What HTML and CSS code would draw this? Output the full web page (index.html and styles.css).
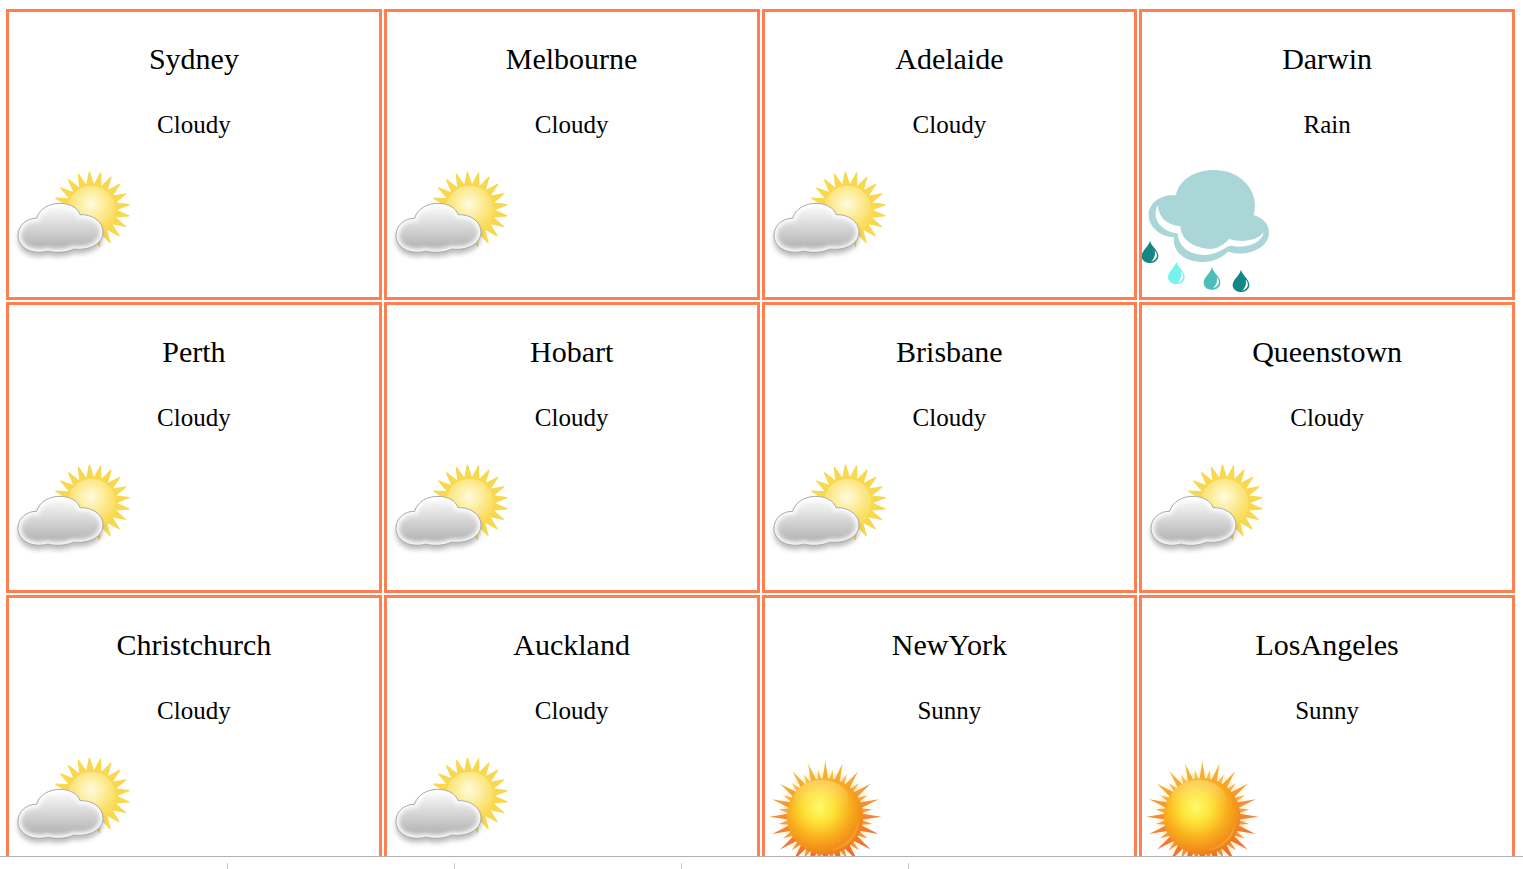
FILE: index.html
```html
<!DOCTYPE html>
<html lang="en">
<head>
<meta charset="utf-8">
<title>Weather</title>
<link rel="stylesheet" href="styles.css">
</head>
<body>
<svg class="icon-defs" aria-hidden="true">
  <defs>
    <radialGradient id="paleSun" gradientUnits="userSpaceOnUse" cx="273" cy="162" r="78">
      <stop offset="0" stop-color="#fffbe2"/><stop offset=".4" stop-color="#fdf0a8"/><stop offset="1" stop-color="#fbdc5e"/>
    </radialGradient>
    <linearGradient id="cloudFill" x1="0" y1="0" x2="0" y2="1">
      <stop offset="0" stop-color="#ffffff"/><stop offset=".3" stop-color="#e6e6e6"/><stop offset=".85" stop-color="#b8b8b8"/><stop offset="1" stop-color="#c4c4c4"/>
    </linearGradient>
    <radialGradient id="hotSun" gradientUnits="userSpaceOnUse" cx="178" cy="202" r="150">
      <stop offset="0" stop-color="#fffb6a"/><stop offset=".32" stop-color="#fde035"/><stop offset=".62" stop-color="#f9ae1d"/><stop offset="1" stop-color="#ec7a18"/>
    </radialGradient>
    <linearGradient id="hotRays" gradientUnits="userSpaceOnUse" x1="170" y1="62" x2="220" y2="398">
      <stop offset="0" stop-color="#f8bd33"/><stop offset=".5" stop-color="#f4873a"/><stop offset="1" stop-color="#ee6426"/>
    </linearGradient>
    <linearGradient id="gloss" x1="0" y1="0" x2="0" y2="1">
      <stop offset="0" stop-color="#fff" stop-opacity=".28"/><stop offset=".7" stop-color="#fff" stop-opacity="0"/>
    </linearGradient>
    <filter id="soft" x="-20%" y="-20%" width="140%" height="140%"><feGaussianBlur stdDeviation="8"/></filter>
    <filter id="softEdge" x="-20%" y="-20%" width="140%" height="140%"><feGaussianBlur stdDeviation="6"/></filter>
    <path id="cloudShape" d="M110 205C118 176 148 160 180 160C210 160 234 174 240 194C276 192 309 214 309 246C309 280 270 303 221 297C198 309 163 309 144 303C98 316 54 294 54 256C54 226 80 204 110 205Z"/>
    <clipPath id="cloudClip"><use href="#cloudShape"/></clipPath>
    <path id="drop" d="M0 -35C5 -17 25 -6 25 11C25 24 14 32 0 32C-14 32 -25 24 -25 11C-25 -5 -5 -16 0 -35Z"/>
    <path id="dropShine" d="M14 -5C24 5 25 21 3 28C13 19 17 8 14 -5Z" fill="#fff"/>

    <symbol id="cloudy" viewBox="27 45 396 396">
      <path data-cx="275" data-cy="179" data-count="21" data-tip="113" data-valley="72" data-start="-93.5" fill="#f8d84f" stroke="#f8d84f" stroke-width="4" stroke-linejoin="round"/>
      <circle cx="275" cy="179" r="72" fill="url(#paleSun)"/>
      <use href="#cloudShape" transform="translate(0 13)" fill="#777" opacity=".5" filter="url(#soft)"/>
      <use href="#cloudShape" fill="url(#cloudFill)"/>
      <g clip-path="url(#cloudClip)"><use href="#cloudShape" fill="none" stroke="#fff" stroke-width="18" filter="url(#softEdge)"/></g>
      <use href="#cloudShape" fill="none" stroke="#aaa" stroke-width="3"/>
    </symbol>

    <symbol id="rain" viewBox="18 45 396 396">
      <path fill="#aad6d7" d="M120 136C128 90 176 60 235 60C304 60 355 108 357 164C357 177 355 187 353 196C380 203 399 222 399 248C399 291 337 324 276 305C256 326 226 336 196 336C148 335 108 306 114 262C72 260 38 231 38 195C38 157 76 132 120 136Z"/>
      <path fill="#fff" d="M65 166C70 207 94 225 133 229C134 271 177 295 222 297C247 296 267 281 279 267C321 279 364 272 383 247C379 278 332 298 286 287C270 286 254 312 205 315C160 315 126 289 125 250C92 248 60 226 59 193C59 180 61 173 65 166Z"/>
      <g transform="translate(42 307)"><use href="#drop" fill="#148784"/><use href="#dropShine"/></g>
      <g transform="translate(121 370)"><use href="#drop" fill="#76f3ef"/><use href="#dropShine"/></g>
      <g transform="translate(228 387)"><use href="#drop" fill="#4dbdba"/><use href="#dropShine"/></g>
      <g transform="translate(315 394)"><use href="#drop" fill="#148784"/><use href="#dropShine"/></g>
    </symbol>

    <symbol id="sunny" viewBox="15 33 396 396">
      <circle cx="196" cy="230" r="132" fill="#ffe694" opacity=".6" filter="url(#soft)"/>
      <path data-cx="196" data-cy="230" data-count="20" data-tip="142" data-valley="84" data-start="-81" fill="url(#hotRays)" opacity=".8"/>
      <path data-cx="196" data-cy="230" data-count="20" data-tip="168" data-valley="84" data-start="-90" fill="url(#hotRays)"/>
      <circle cx="195" cy="229" r="115" fill="url(#hotSun)"/>
      <ellipse cx="184" cy="178" rx="82" ry="58" fill="url(#gloss)"/>
      <path d="M296 239C288 286 253 320 211 330C258 329 297 291 296 239Z" fill="#ffc04b" opacity=".4"/>
    </symbol>
  </defs>
</svg>

<main class="board">
  <div class="cards">
    <article class="card"><h2 class="city">Sydney</h2><p class="condition">Cloudy</p><svg class="icon" role="img" aria-label="Cloudy"><use href="#cloudy"/></svg></article>
    <article class="card"><h2 class="city">Melbourne</h2><p class="condition">Cloudy</p><svg class="icon" role="img" aria-label="Cloudy"><use href="#cloudy"/></svg></article>
    <article class="card"><h2 class="city">Adelaide</h2><p class="condition">Cloudy</p><svg class="icon" role="img" aria-label="Cloudy"><use href="#cloudy"/></svg></article>
    <article class="card"><h2 class="city">Darwin</h2><p class="condition">Rain</p><svg class="icon" role="img" aria-label="Rain"><use href="#rain"/></svg></article>
    <article class="card"><h2 class="city">Perth</h2><p class="condition">Cloudy</p><svg class="icon" role="img" aria-label="Cloudy"><use href="#cloudy"/></svg></article>
    <article class="card"><h2 class="city">Hobart</h2><p class="condition">Cloudy</p><svg class="icon" role="img" aria-label="Cloudy"><use href="#cloudy"/></svg></article>
    <article class="card"><h2 class="city">Brisbane</h2><p class="condition">Cloudy</p><svg class="icon" role="img" aria-label="Cloudy"><use href="#cloudy"/></svg></article>
    <article class="card"><h2 class="city">Queenstown</h2><p class="condition">Cloudy</p><svg class="icon" role="img" aria-label="Cloudy"><use href="#cloudy"/></svg></article>
    <article class="card"><h2 class="city">Christchurch</h2><p class="condition">Cloudy</p><svg class="icon" role="img" aria-label="Cloudy"><use href="#cloudy"/></svg></article>
    <article class="card"><h2 class="city">Auckland</h2><p class="condition">Cloudy</p><svg class="icon" role="img" aria-label="Cloudy"><use href="#cloudy"/></svg></article>
    <article class="card"><h2 class="city">NewYork</h2><p class="condition">Sunny</p><svg class="icon" role="img" aria-label="Sunny"><use href="#sunny"/></svg></article>
    <article class="card"><h2 class="city">LosAngeles</h2><p class="condition">Sunny</p><svg class="icon" role="img" aria-label="Sunny"><use href="#sunny"/></svg></article>
  </div>
</main>
<footer class="ruler"><span class="tick"></span><span class="tick"></span><span class="tick"></span><span class="tick"></span></footer>
<script src="rays.js"></script>
</body>
</html>
```

FILE: styles.css
```css
* {
  box-sizing: border-box;
}

body {
  display: flex;
  flex-direction: column;
  height: 100vh;
  margin: 0;
  overflow: hidden;
  background: #fff;
  color: #000;
  font-family: "Liberation Serif", "Times New Roman", serif;
}

.icon-defs {
  position: absolute;
  width: 0;
  height: 0;
}

.board {
  flex: 1;
  min-height: 0;
  overflow: hidden;
  padding: 9px 8px 0 6px;
}

.cards {
  display: grid;
  grid-template-columns: repeat(4, 1fr);
  gap: 2px;
}

.card {
  display: flex;
  flex-direction: column;
  border: 3px solid coral;
  padding-top: 30px;
  text-align: center;
}

.city {
  margin: 0 0 35px;
  font-size: 30px;
  font-weight: 400;
  line-height: 34px;
}

.condition {
  margin: 0 0 26px;
  font-size: 25px;
  line-height: 28px;
}

.icon {
  display: block;
  width: 132px;
  height: 132px;
}

.ruler {
  display: flex;
  flex: none;
  height: 13px;
  padding: 6px 0 0 1px;
  border-top: 1px solid #b0b0b0;
}

.tick {
  width: 227px;
  border-right: 1px solid #c8c8c8;
}
```

FILE: rays.js
```js
// Builds the star-shaped ray outlines of the sun icons.
document.querySelectorAll("path[data-count]").forEach(function (path) {
  var cx = Number(path.dataset.cx);
  var cy = Number(path.dataset.cy);
  var count = Number(path.dataset.count);
  var start = Number(path.dataset.start);
  var points = [];
  for (var i = 0; i < count * 2; i++) {
    var radius = Number(i % 2 ? path.dataset.valley : path.dataset.tip);
    var angle = (start + i * 180 / count) * Math.PI / 180;
    points.push((cx + radius * Math.cos(angle)).toFixed(1) + " " + (cy + radius * Math.sin(angle)).toFixed(1));
  }
  path.setAttribute("d", "M" + points.join("L") + "Z");
});
```
